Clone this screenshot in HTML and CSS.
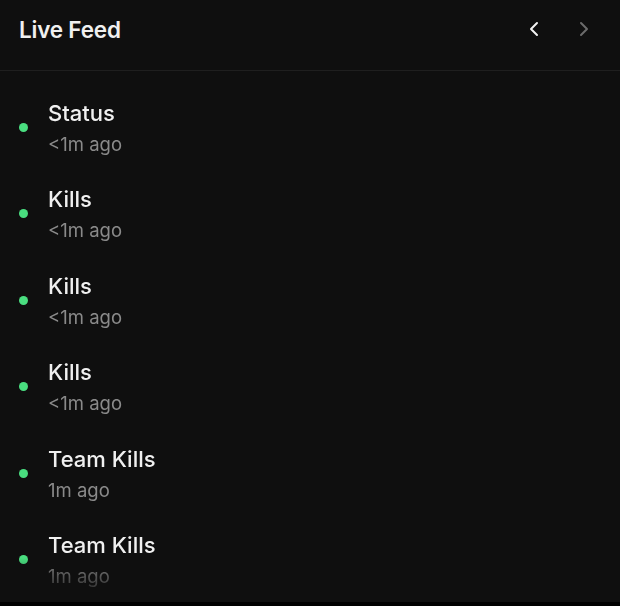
FILE: index.html
```html
<!DOCTYPE html>
<html>
<head>
<meta charset="utf-8">
<link rel="stylesheet" href="styles.css">
</head>
<body>
<div class="card">
  <header class="head">
    <h1 class="title">Live Feed</h1>
    <div class="nav">
      <button class="nav-btn active" aria-label="Previous">
        <svg width="24" height="24" viewBox="0 0 24 24" fill="none" stroke="currentColor" stroke-width="2" stroke-linecap="round" stroke-linejoin="round"><path d="m15 18-6-6 6-6"/></svg>
      </button>
      <button class="nav-btn" aria-label="Next">
        <svg width="24" height="24" viewBox="0 0 24 24" fill="none" stroke="currentColor" stroke-width="2" stroke-linecap="round" stroke-linejoin="round"><path d="m9 18 6-6-6-6"/></svg>
      </button>
    </div>
  </header>
  <ul class="feed">
    <li class="item"><span class="dot"></span><div class="text"><div class="name">Status</div><div class="time">&lt;1m ago</div></div></li>
    <li class="item"><span class="dot"></span><div class="text"><div class="name">Kills</div><div class="time">&lt;1m ago</div></div></li>
    <li class="item"><span class="dot"></span><div class="text"><div class="name">Kills</div><div class="time">&lt;1m ago</div></div></li>
    <li class="item"><span class="dot"></span><div class="text"><div class="name">Kills</div><div class="time">&lt;1m ago</div></div></li>
    <li class="item"><span class="dot"></span><div class="text"><div class="name">Team Kills</div><div class="time">1m ago</div></div></li>
    <li class="item"><span class="dot"></span><div class="text"><div class="name">Team Kills</div><div class="time">1m ago</div></div></li>
  </ul>
</div>
</body>
</html>
```
FILE: styles.css
```css
html, body {
  margin: 0;
  padding: 0;
  background: #000;
}
body {
  font-family: Inter, "Noto Sans", sans-serif;
  color: #f2f2f2;
}
.card {
  width: 620px;
  height: 602px;
  background: #0f0f0f;
  overflow: hidden;
  display: flex;
  flex-direction: column;
}
.head {
  height: 71px;
  border-bottom: 1px solid #1f1f1f;
  display: flex;
  align-items: center;
  justify-content: space-between;
  padding: 0 20px 12px 19px;
  box-sizing: border-box;
  flex: none;
}
.title {
  margin: 0;
  font-size: 22.5px;
  font-weight: 600;
  letter-spacing: -0.2px;
  color: #f0f0f0;
}
.nav {
  display: flex;
  gap: 18px;
}
.nav-btn {
  width: 32px;
  height: 32px;
  background: none;
  border: none;
  padding: 0;
  display: flex;
  align-items: center;
  justify-content: center;
  color: #6b6b6b;
}
.nav-btn svg {
  display: block;
}
.nav-btn.active {
  color: #f2f2f2;
}
.feed {
  list-style: none;
  margin: 0;
  padding: 13.8px 0 0;
  flex: 1;
  overflow: hidden;
  -webkit-mask-image: linear-gradient(to bottom, #000 calc(100% - 44px), rgba(0,0,0,0) 100%);
  mask-image: linear-gradient(to bottom, #000 calc(100% - 44px), rgba(0,0,0,0) 100%);
}
.item {
  display: flex;
  align-items: center;
  gap: 20px;
  padding: 0 19px;
  height: 86.4px;
  box-sizing: border-box;
}
.dot {
  width: 9px;
  height: 9px;
  border-radius: 50%;
  background: #4ade80;
  flex: none;
  margin-top: -1px;
}
.name {
  font-size: 22px;
  font-weight: 500;
  line-height: 30px;
  color: #f0f0f0;
}
.time {
  font-size: 18.5px;
  line-height: 28px;
  margin-top: 2px;
  color: #8a8a8a;
}
```
